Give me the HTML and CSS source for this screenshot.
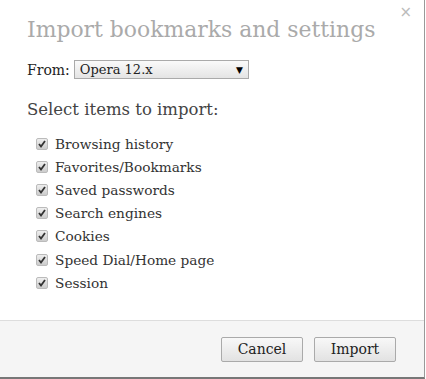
FILE: index.html
```html
<!DOCTYPE html>
<html>
<head>
	<title>Import bookmarks and settings</title>
	<meta charset="utf-8">
	<link rel="stylesheet" href="styles.css">
</head>
<body>
	<div class="dialog">
		<div class="dialogBody">
			<span class="closeButton">&#215;</span>
			<h1 class="dialogTitle">Import bookmarks and settings</h1>
			<div class="fromRow">
				<label for="browserSelect">From:</label>
				<div class="selectBox" id="browserSelect">
					<span>Opera 12.x</span>
					<span class="selectArrow">&#9660;</span>
				</div>
			</div>
			<div class="sectionLabel">Select items to import:</div>
			<ul class="itemList">
				<li><span class="checkBox"><svg viewBox="0 0 10 10"><path d="M2 5 L4 7.5 L8 2" fill="none" stroke="#333" stroke-width="1.8"/></svg></span>Browsing history</li>
				<li><span class="checkBox"><svg viewBox="0 0 10 10"><path d="M2 5 L4 7.5 L8 2" fill="none" stroke="#333" stroke-width="1.8"/></svg></span>Favorites/Bookmarks</li>
				<li><span class="checkBox"><svg viewBox="0 0 10 10"><path d="M2 5 L4 7.5 L8 2" fill="none" stroke="#333" stroke-width="1.8"/></svg></span>Saved passwords</li>
				<li><span class="checkBox"><svg viewBox="0 0 10 10"><path d="M2 5 L4 7.5 L8 2" fill="none" stroke="#333" stroke-width="1.8"/></svg></span>Search engines</li>
				<li><span class="checkBox"><svg viewBox="0 0 10 10"><path d="M2 5 L4 7.5 L8 2" fill="none" stroke="#333" stroke-width="1.8"/></svg></span>Cookies</li>
				<li><span class="checkBox"><svg viewBox="0 0 10 10"><path d="M2 5 L4 7.5 L8 2" fill="none" stroke="#333" stroke-width="1.8"/></svg></span>Speed Dial/Home page</li>
				<li><span class="checkBox"><svg viewBox="0 0 10 10"><path d="M2 5 L4 7.5 L8 2" fill="none" stroke="#333" stroke-width="1.8"/></svg></span>Session</li>
			</ul>
		</div>
		<div class="dialogFooter">
			<button class="button">Cancel</button>
			<button class="button">Import</button>
		</div>
	</div>
</body>
</html>
```

FILE: styles.css
```css
body {
	margin: 0;
	padding: 0;
	background: #fff;
	font-family: "DejaVu Serif", serif;
	color: #333;
}

.dialog {
	width: 424px;
	height: 377px;
	border-right: 1px solid #999;
	border-bottom: 2px solid #777;
	display: flex;
	flex-direction: column;
	background: #fff;
}

.dialogBody {
	position: relative;
	flex: 1;
	padding: 0 0 0 27px;
}

.closeButton {
	position: absolute;
	top: 3px;
	right: 12px;
	font-family: "DejaVu Sans", sans-serif;
	font-size: 15px;
	color: #bbb;
}

.dialogTitle {
	margin: 0;
	padding-top: 17px;
	font-size: 21.9px;
	font-weight: normal;
	color: #aaa;
	line-height: 26px;
}

.fromRow {
	display: flex;
	align-items: center;
	margin-top: 17px;
	font-size: 14px;
	color: #222;
}

.fromRow label {
	margin-right: 4px;
}

.selectBox {
	width: 163px;
	height: 17px;
	padding: 0 5px;
	border: 1px solid #aaa;
	background: linear-gradient(#fafafa, #e4e4e4);
	display: flex;
	align-items: center;
	justify-content: space-between;
	font-size: 13px;
}

.selectArrow {
	font-family: "DejaVu Sans", sans-serif;
	font-size: 9px;
	color: #000;
}

.sectionLabel {
	margin-top: 21px;
	font-size: 16.5px;
	color: #444;
}

.itemList {
	list-style: none;
	margin: 13px 0 0 0;
	padding: 0 0 0 9px;
}

.itemList li {
	display: flex;
	align-items: center;
	height: 23.2px;
	font-size: 13.7px;
	color: #333;
}

.checkBox {
	width: 10px;
	height: 10px;
	margin-right: 7px;
	border: 1px solid #bbb;
	border-radius: 2px;
	background: linear-gradient(#eee, #ccc);
	display: flex;
}

.checkBox svg {
	width: 10px;
	height: 10px;
}

.dialogFooter {
	height: 56px;
	border-top: 1px solid #ddd;
	background: #f5f5f5;
	display: flex;
	justify-content: flex-end;
	align-items: center;
	gap: 11px;
	padding-right: 28px;
}

.button {
	height: 25px;
	min-width: 82px;
	padding: 0 14px;
	border: 1px solid #aaa;
	border-radius: 2px;
	background: linear-gradient(#f8f8f8, #e2e2e2);
	font-family: "DejaVu Serif", serif;
	font-size: 14px;
	color: #222;
}
```
